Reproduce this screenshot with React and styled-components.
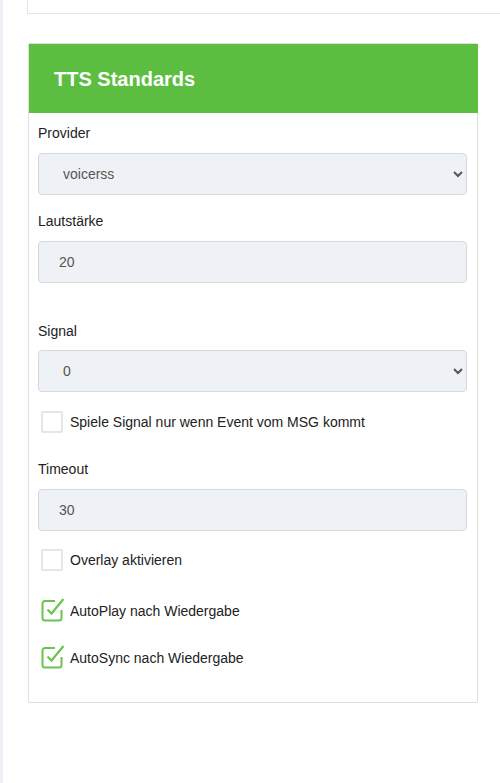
import React from "react";
import styled, { createGlobalStyle } from "styled-components";

const Global = createGlobalStyle`
  html, body { margin: 0; padding: 0; background: #fff; }
  body { font-family: "Liberation Sans", Arial, sans-serif; font-size: 14px; color: #222; }
`;

const Page = styled.div`
  min-height: 783px;
  border-left: 3px solid #edf1f5;
  box-sizing: border-box;
  overflow: hidden;
`;

const TopCard = styled.div`
  height: 13px;
  margin-left: 24px;
  border-left: 1px solid #e2e4e7;
  border-bottom: 1px solid #e2e4e7;
  background: #fff;
`;

const Card = styled.section`
  width: 450px;
  box-sizing: border-box;
  margin: 29px 0 0 25px;
  border: 1px solid #dedfe1;
  border-radius: 2px;
  background: #fff;
  padding-bottom: 32px;
`;

const Header = styled.header`
  height: 69px;
  background: #5cbe40;
  display: flex;
  align-items: center;
  padding-left: 25px;
  margin: 0 -1px 0 0;
`;

const Title = styled.h2`
  margin: 0;
  color: #fff;
  font-size: 20px;
  font-weight: bold;
  line-height: 24px;
  padding-top: 1px;
`;

const Body = styled.div`
  padding: 10px 10px 0 9px;
  display: flex;
  flex-direction: column;
`;

const Group = styled.div`
  margin-bottom: ${(p) => p.$mb || 16}px;
  display: flex;
  flex-direction: column;
`;

const Label = styled.label`
  line-height: 20px;
  font-size: 14px;
  color: #222;
  margin-bottom: ${(p) => p.$mb || 10}px;
`;

const fieldCss = `
  box-sizing: border-box;
  width: 100%;
  height: 42px;
  border: 1px solid #d5d9de;
  border-radius: 4px;
  background-color: #eef1f5;
  font-family: "Liberation Sans", Arial, sans-serif;
  font-size: 14px;
  color: #555;
  outline: none;
`;

const Select = styled.select`
  ${fieldCss}
  padding: 0 8px 0 20px;
`;

const Input = styled.input`
  ${fieldCss}
  padding: 0 20px;
`;

const CheckRow = styled.div`
  display: flex;
  align-items: center;
  gap: 7px;
  padding-left: 3px;
  height: 24px;
  margin-bottom: ${(p) => p.$mb || 0}px;
`;

const Box = styled.span`
  width: 22px;
  height: 22px;
  box-sizing: border-box;
  border: 2px solid #e6e6e6;
  border-radius: 2px;
  flex: none;
`;

const CheckIcon = styled.svg`
  width: 24px;
  height: 26px;
  flex: none;
  margin-right: -2px;
  margin-top: -4px;
`;

const CheckText = styled.span`
  font-size: 14px;
  color: #222;
  line-height: 20px;
`;

function Checked() {
  return (
    <CheckIcon viewBox="0 0 24 26" fill="none">
      <path
        d="M14 5 H4 a2.5 2.5 0 0 0 -2.5 2.5 V22 a2.5 2.5 0 0 0 2.5 2.5 H18 a2.5 2.5 0 0 0 2.5 -2.5 V14"
        stroke="#6cc24f"
        strokeWidth="2"
      />
      <path d="M6.5 13.5 L10.5 17.5 L22.5 3" stroke="#6cc24f" strokeWidth="2.2" />
    </CheckIcon>
  );
}

function Check({ checked, label, mb }) {
  return (
    <CheckRow $mb={mb}>
      {checked ? <Checked /> : <Box />}
      <CheckText>{label}</CheckText>
    </CheckRow>
  );
}

export default function App() {
  return (
    <>
      <Global />
      <Page>
        <TopCard />
        <Card>
          <Header>
            <Title>TTS Standards</Title>
          </Header>
          <Body>
            <Group $mb={16}>
              <Label>Provider</Label>
              <Select defaultValue="voicerss">
                <option value="voicerss">voicerss</option>
              </Select>
            </Group>
            <Group $mb={38}>
              <Label>Lautstärke</Label>
              <Input defaultValue="20" />
            </Group>
            <Group $mb={18}>
              <Label $mb={9}>Signal</Label>
              <Select defaultValue="0">
                <option value="0">0</option>
              </Select>
            </Group>
            <Check label="Spiele Signal nur wenn Event vom MSG kommt" mb={25} />
            <Group $mb={17}>
              <Label>Timeout</Label>
              <Input defaultValue="30" />
            </Group>
            <Check label="Overlay aktivieren" mb={27} />
            <Check checked label="AutoPlay nach Wiedergabe" mb={23} />
            <Check checked label="AutoSync nach Wiedergabe" />
          </Body>
        </Card>
      </Page>
    </>
  );
}
